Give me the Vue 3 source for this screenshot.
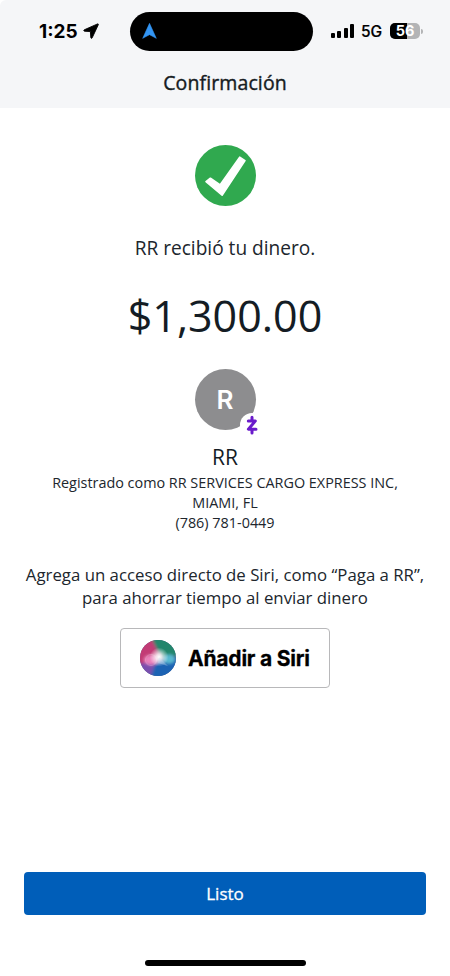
<script setup>
const bars = [5, 7.5, 10.5, 14]
const charge = 56
</script>

<template>
  <div class="screen">
    <header class="top">
      <div class="status">
        <div class="clock">
          <span class="time">1:25</span>
          <svg class="loc" viewBox="0 0 16 16"><path d="M14.6.9 1.3 6.8c-.8.4-.6 1.3.2 1.4l5.9.4.4 6c.1.9 1 1 1.4.2L15.3 1.7c.2-.6-.2-1-.7-.8Z" fill="#000" stroke="#000" stroke-width=".9" stroke-linejoin="round" /></svg>
        </div>
        <div class="island">
          <svg viewBox="0 0 14 15"><path d="M7 .3 13.4 14.4 7 10.9.6 14.4Z" fill="#3395f3" stroke="#3395f3" stroke-width=".5" stroke-linejoin="round" /></svg>
        </div>
        <div class="signals">
          <div class="bars"><i v-for="h in bars" :key="h" :style="{ height: h + 'px' }"></i></div>
          <span class="net">5G</span>
          <div class="battery"><span class="fill" :style="{ width: charge + '%' }"></span><span class="pct">{{ charge }}</span></div>
          <span class="cap"></span>
        </div>
      </div>
      <h1>Confirmación</h1>
    </header>

    <main>
      <svg class="check" viewBox="0 0 61 61">
        <circle cx="30.5" cy="30.5" r="30.5" fill="#30a94f" />
        <path d="M11 36.6 15.4 33.2 25.2 39.8 44.7 12.2 50 15.6 27.1 50.2Z" fill="#fff" stroke="#fff" stroke-width="1.6" stroke-linejoin="round" />
      </svg>
      <p class="received">RR recibió tu dinero.</p>
      <p class="amount">$1,300.00</p>
      <div class="avatar">
        <span class="disc">R</span>
        <svg class="zelle" viewBox="0 0 24 24">
          <circle cx="12" cy="12" r="12" fill="#fff" />
          <path d="M8.3 7.9H15.4L8.4 16.2H16M12 4.2V7M12 17V20" fill="none" stroke="#6a1bcb" stroke-width="3" stroke-linecap="round" stroke-linejoin="round" />
        </svg>
      </div>
      <h2>RR</h2>
      <div class="details">
        <p>Registrado como RR SERVICES CARGO EXPRESS INC,</p>
        <p>MIAMI, FL</p>
        <p>(786) 781-0449</p>
      </div>
      <div class="hint">
        <p>Agrega un acceso directo de Siri, como “Paga a RR”,</p>
        <p>para ahorrar tiempo al enviar dinero</p>
      </div>
      <button class="siri">
        <svg viewBox="0 0 36 36">
          <defs>
            <clipPath id="orb"><circle cx="18" cy="18" r="18" /></clipPath>
            <filter id="soft" x="-50%" y="-50%" width="200%" height="200%"><feGaussianBlur stdDeviation="1.6" /></filter>
            <radialGradient id="glow"><stop offset="0" stop-color="#fff" /><stop offset=".3" stop-color="#fff" stop-opacity=".8" /><stop offset="1" stop-color="#fff" stop-opacity="0" /></radialGradient>
          </defs>
          <g clip-path="url(#orb)">
            <rect width="36" height="36" fill="#4f5b86" />
            <g filter="url(#soft)">
              <path d="M10-4H40V15L22 18Z" fill="#23866c" />
              <path d="M-4 3 11-3 20 17 8 28-4 24Z" fill="#c23a74" />
              <path d="M2 29 18 21 40 17V40H0Z" fill="#1b63b3" />
              <path d="M-2 24 16 21 11 36-2 34Z" fill="#7a4fae" />
              <ellipse cx="11" cy="20" rx="7" ry="5" fill="#ea82bb" />
              <ellipse cx="29" cy="19" rx="6" ry="4.5" fill="#59b9d0" />
            </g>
            <circle cx="19" cy="17" r="9.5" fill="url(#glow)" />
            <circle cx="11" cy="20" r="5.5" fill="none" stroke="#fff" stroke-opacity=".25" stroke-width=".8" />
            <path d="M19 17 28 26 18 23Z" fill="#c9e3f5" fill-opacity=".35" />
          </g>
        </svg>
        <span>Añadir a Siri</span>
      </button>
    </main>

    <footer>
      <button class="done">Listo</button>
      <span class="home"></span>
    </footer>
  </div>
</template>

<style>
body { margin: 0; background: #fff; }
</style>

<style scoped>
* { box-sizing: border-box; }
p, h1, h2 { margin: 0; font-weight: 400; white-space: nowrap; }
button { padding: 0; margin: 0; }
.screen { width: 450px; height: 976px; display: flex; flex-direction: column; background: #fff; color: #20262d; font-family: "Open Sans", sans-serif; overflow: hidden; }
.top { height: 108px; background: #f5f6f8; flex: none; border-top-left-radius: 6px; }
.status { height: 62px; display: grid; grid-template-columns: 130px 183px 137px; align-items: center; font-family: Inter, sans-serif; color: #000; }
.clock { display: flex; align-items: center; padding-left: 39px; gap: 5px; }
.time { font-size: 19px; font-weight: 700; line-height: 22px; padding-top: 1px; }
.loc { width: 16px; height: 16px; }
.island { height: 39px; border-radius: 20px; background: #000; display: flex; align-items: center; padding-left: 12px; }
.island svg { width: 15px; height: 16px; }
.signals { display: flex; align-items: center; padding-left: 18px; }
.bars { width: 23px; height: 14px; display: flex; align-items: flex-end; justify-content: space-between; }
.bars i { width: 4px; border-radius: 1px; background: #000; }
.net { margin-left: 7px; width: 21px; font-size: 15.5px; font-weight: 500; line-height: 20px; padding-top: 1px; -webkit-text-stroke: .2px #000; }
.battery { position: relative; margin-left: 8px; width: 30px; height: 16px; border-radius: 5px; background: #b3b4b6; overflow: hidden; display: flex; align-items: center; justify-content: center; }
.fill { position: absolute; left: 0; top: 0; bottom: 0; background: #000; }
.pct { position: relative; font-size: 14.5px; line-height: 16px; font-weight: 700; color: #fff; }
.cap { width: 2px; height: 5px; margin-left: 1px; border-radius: 0 2px 2px 0; background: #b3b4b6; }
h1 { text-align: center; font-size: 19.5px; letter-spacing: .12px; line-height: 26px; margin-top: 8px; color: #161c22; -webkit-text-stroke: .4px #161c22; }
main { flex: 1; display: flex; flex-direction: column; align-items: center; }
.check { width: 61px; height: 61px; margin-top: 37px; flex: none; }
.received { margin-top: 29px; font-size: 19.1px; line-height: 26px; }
.amount { margin-top: 26px; font-size: 43px; line-height: 58px; color: #141c24; }
.avatar { position: relative; width: 61px; height: 61px; margin-top: 24px; flex: none; }
.disc { display: flex; align-items: center; justify-content: center; width: 61px; height: 61px; border-radius: 50%; background: #8d8d8f; color: #fff; font-family: Inter, sans-serif; font-size: 26px; font-weight: 600; }
.zelle { position: absolute; left: 45px; top: 44px; width: 24px; height: 24px; }
h2 { margin-top: 13px; font-size: 21px; line-height: 28px; color: #141c24; }
.details { margin-top: 2px; text-align: center; font-size: 14.4px; line-height: 20.2px; }
.hint { margin-top: 29px; text-align: center; font-size: 16.8px; line-height: 23px; }
.siri { width: 210px; height: 60px; margin-top: 19px; border: 1px solid #b8b8ba; border-radius: 4px; background: #fff; display: flex; align-items: center; padding-left: 19px; gap: 12px; flex: none; }
.siri svg { width: 36px; height: 36px; flex: none; }
.siri span { font: 700 21px/28px Inter, sans-serif; letter-spacing: -.2px; color: #000; white-space: nowrap; padding-top: 2px; -webkit-text-stroke: .3px #000; }
footer { height: 104px; flex: none; display: flex; flex-direction: column; align-items: center; }
.done { width: 402px; height: 43px; border: 0; border-radius: 4px; background: #005eb9; color: #fff; font: 400 17px/24px "Open Sans", sans-serif; -webkit-text-stroke: .3px #fff; }
.home { width: 161px; height: 6px; margin-top: 45px; border-radius: 3px; background: #000; }
</style>
